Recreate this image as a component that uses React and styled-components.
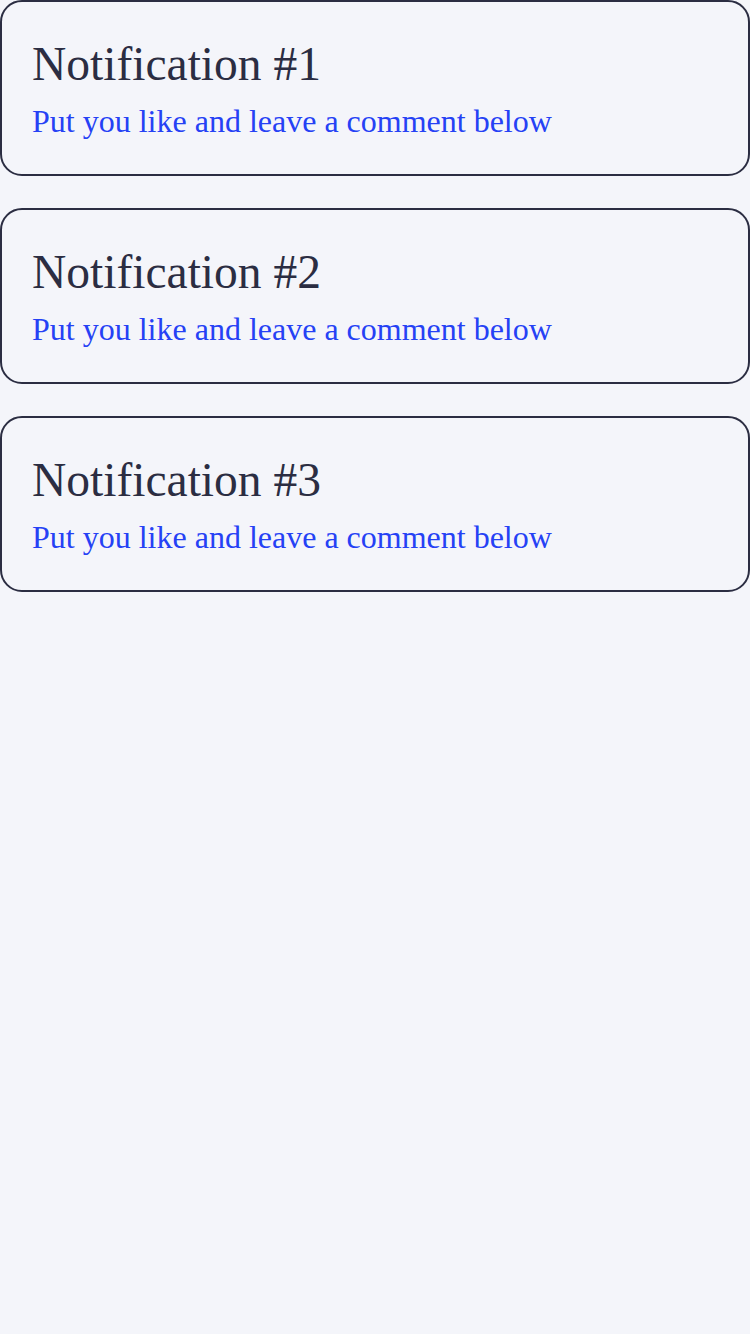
import React from 'react';
import styled, { createGlobalStyle } from 'styled-components';

const GlobalStyle = createGlobalStyle`
  html, body {
    margin: 0;
    padding: 0;
    background: #f4f5fa;
  }
  body {
    font-family: "Liberation Serif", "Times New Roman", serif;
  }
`;

const notifications = [
  { id: 1, title: 'Notification #1', text: 'Put you like and leave a comment below' },
  { id: 2, title: 'Notification #2', text: 'Put you like and leave a comment below' },
  { id: 3, title: 'Notification #3', text: 'Put you like and leave a comment below' },
];

const App = () => {
  return (
    <>
      <GlobalStyle />
      <List>
        {notifications.map(item => (
          <Card key={item.id}>
            <Title>{item.title}</Title>
            <Message>{item.text}</Message>
          </Card>
        ))}
      </List>
    </>
  );
};
export default App;

const List = styled.div`
  display: flex;
  flex-direction: column;
  gap: 32px;
`;

const Card = styled.div`
  box-sizing: border-box;
  height: 176px;
  padding: 34px 30px 0;
  border: 2px solid #2b2d42;
  border-radius: 22px;
`;

const Title = styled.h2`
  margin: 0;
  font-size: 47.5px;
  font-weight: 400;
  line-height: 56px;
  color: #2b2d42;
`;

const Message = styled.p`
  margin: 8px 0 0;
  font-size: 32px;
  line-height: 42px;
  color: #2541f5;
`;
